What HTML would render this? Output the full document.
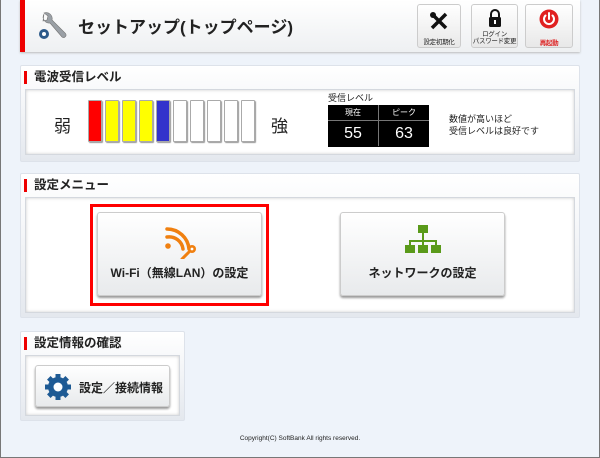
<!DOCTYPE html>
<html><head><meta charset="utf-8"><style>
*{box-sizing:border-box;margin:0;padding:0}
body{width:600px;height:458px;background:#eef3fa;position:relative;overflow:hidden;font-family:"Liberation Sans","Noto Sans CJK JP",sans-serif;color:#222}
.frame{position:absolute;left:0;top:0;width:600px;height:458px;border:1px solid #777;border-top:none;pointer-events:none}
.abs{position:absolute}
.hdr{left:20px;top:0;width:560px;height:52px;background:linear-gradient(#fff,#eef0f2);border-left:5px solid #e00;box-shadow:0 1px 2px #bbb}
.tb{top:4px;height:44px;background:linear-gradient(#fff,#e8e8e8);border:1px solid #ccc;border-radius:3px;font-size:6.5px;text-align:center;line-height:7.5px;white-space:nowrap;letter-spacing:-0.3px}
.panel{background:linear-gradient(#fff,#e4e8ee);border:1px solid #dde2ea;border-radius:2px}
.ptitle{font-size:12.5px;font-weight:bold;position:absolute;left:8px;padding-left:7px;border-left:3px solid #e00;line-height:13px}
.inner{background:#fff;border:1px solid #d4d8de;box-shadow:inset 0 0 3px #ccc}
.bar{top:100px;width:14px;height:42px;border:1px solid #aaa;border-radius:1px;box-shadow:1px 1px 1px #999}
.btn{background:linear-gradient(#fff,#e8eaec);border:1px solid #ccc;border-radius:3px;box-shadow:0 2px 2px #999;text-align:center;font-weight:bold;font-size:12px}
</style></head><body>
<div class="abs hdr"></div>
<svg class="abs" style="left:36px;top:10px" width="32" height="32" viewBox="0 0 32 32">
<path d="M8 4a6 6 0 0 0 6 9l12 14a2.5 2.5 0 0 0 3.5-3.5L16 10a6 6 0 0 0-8-7l4 3-1 4-4 1z" fill="#9aa0a6" stroke="#777" stroke-width=".6"/>
<circle cx="8" cy="24" r="5" fill="#2d5a8a"/><circle cx="8" cy="24" r="2" fill="#fff"/>
</svg>
<div class="abs" style="left:78px;top:13px;font-size:17px;font-weight:bold">セットアップ(トップページ)</div>
<div class="abs tb" style="left:417px;width:44px"><svg width="20" height="20" viewBox="0 0 20 20" style="margin-top:6px"><path d="M3 3l14 14M17 3L3 17" stroke="#111" stroke-width="3.5"/><circle cx="4" cy="4" r="3" fill="#111"/></svg><div style="margin-top:5px">設定初期化</div></div>
<div class="abs tb" style="left:471px;width:47px"><svg width="16" height="20" viewBox="0 0 16 20" style="margin-top:3px"><path d="M4 9V6a4 4 0 0 1 8 0v3" fill="none" stroke="#111" stroke-width="2"/><rect x="2" y="9" width="12" height="10" rx="1.5" fill="#111"/><rect x="7" y="12" width="2" height="4" fill="#fff"/></svg><br>ログイン<br>パスワード変更</div>
<div class="abs tb" style="left:525px;width:48px;color:#d22"><svg width="20" height="20" viewBox="0 0 20 20" style="margin-top:4px"><circle cx="10" cy="10" r="9.5" fill="#e02020"/><path d="M6.5 6.5a5 5 0 1 0 7 0M10 4v6" fill="none" stroke="#fff" stroke-width="2" stroke-linecap="round"/></svg><div style="margin-top:8px;font-weight:bold">再起動</div></div>

<div class="abs panel" style="left:20px;top:65px;width:560px;height:97px"></div>
<div class="ptitle" style="left:24px;top:71px;position:absolute">電波受信レベル</div>
<div class="abs inner" style="left:25px;top:89px;width:550px;height:66px"></div>
<div class="abs" style="left:54px;top:112px;font-size:17px">弱</div>
<div class="abs" style="left:271px;top:112px;font-size:17px">強</div>
<div class="abs bar" style="left:88px;background:#f00"></div>
<div class="abs bar" style="left:105px;background:#ff0"></div>
<div class="abs bar" style="left:122px;background:#ff0"></div>
<div class="abs bar" style="left:139px;background:#ff0"></div>
<div class="abs bar" style="left:156px;background:#33c"></div>
<div class="abs bar" style="left:173px;background:#fff"></div>
<div class="abs bar" style="left:190px;background:#fff"></div>
<div class="abs bar" style="left:207px;background:#fff"></div>
<div class="abs bar" style="left:224px;background:#fff"></div>
<div class="abs bar" style="left:241px;background:#fff"></div>
<div class="abs" style="left:328px;top:91px;font-size:9px">受信レベル</div>
<div class="abs" style="left:328px;top:105px;width:101px;height:42px;background:#000;color:#fff;text-align:center">
<div style="display:flex;height:16px;font-size:8px;line-height:16px;border-bottom:1px solid #777"><div style="flex:1;border-right:1px solid #777">現在</div><div style="flex:1">ピーク</div></div>
<div style="display:flex;font-size:16px;line-height:25px"><div style="flex:1;border-right:1px solid #777">55</div><div style="flex:1">63</div></div></div>
<div class="abs" style="left:449px;top:113px;font-size:9px;line-height:12px">数値が高いほど<br>受信レベルは良好です</div>

<div class="abs panel" style="left:20px;top:173px;width:560px;height:145px"></div>
<div class="ptitle" style="left:24px;top:179px;position:absolute">設定メニュー</div>
<div class="abs inner" style="left:25px;top:197px;width:550px;height:116px"></div>
<div class="abs" style="left:90px;top:204px;width:179px;height:102px;border:3px solid #f00"></div>
<div class="abs btn" style="left:97px;top:212px;width:165px;height:84px"><svg width="34" height="34" viewBox="0 0 34 34" style="margin-top:12px"><g fill="none" stroke="#f08010" stroke-width="3.5" stroke-linecap="round"><path d="M4 12a14 14 0 0 1 16 12"/><path d="M4 4a22 22 0 0 1 22 20"/></g><circle cx="5" cy="21" r="2.8" fill="#f08010"/><circle cx="29" cy="24" r="4" fill="#f08010"/><circle cx="29" cy="24" r="1.4" fill="#fff"/><path d="M26 27l-7 7" stroke="#f08010" stroke-width="3" stroke-linecap="round"/></svg><div style="margin-top:2px">Wi-Fi（無線LAN）の設定</div></div>
<div class="abs btn" style="left:340px;top:212px;width:165px;height:84px"><svg width="36" height="30" viewBox="0 0 36 30" style="margin-top:12px"><rect x="13" y="0" width="10" height="8" fill="#5a9a1a"/><path d="M18 8v8M5 22v-6h26v6M18 16v6" stroke="#5a9a1a" stroke-width="2" fill="none"/><rect x="0" y="20" width="10" height="8" fill="#5a9a1a"/><rect x="13" y="20" width="10" height="8" fill="#5a9a1a"/><rect x="26" y="20" width="10" height="8" fill="#5a9a1a"/></svg><div style="margin-top:6px">ネットワークの設定</div></div>

<div class="abs panel" style="left:20px;top:331px;width:165px;height:90px"></div>
<div class="ptitle" style="left:24px;top:337px;position:absolute">設定情報の確認</div>
<div class="abs inner" style="left:25px;top:355px;width:155px;height:61px"></div>
<div class="abs btn" style="left:35px;top:365px;width:135px;height:42px;text-align:left"><svg width="28" height="28" viewBox="0 0 28 28" style="position:absolute;left:8px;top:7px"><g fill="#1e5a94"><circle cx="14" cy="14" r="10"/><g stroke="#1e5a94" stroke-width="5"><path d="M14 1v26M1 14h26M4.8 4.8l18.4 18.4M23.2 4.8L4.8 23.2"/></g></g><circle cx="14" cy="14" r="4.5" fill="#fff"/></svg><div style="position:absolute;left:43px;top:13px;font-size:12px">設定／接続情報</div></div>

<div class="abs" style="left:0;width:600px;top:435px;text-align:center;font-size:6.5px">Copyright(C) SoftBank All rights reserved.</div>
<div class="frame"></div>
</body></html>
